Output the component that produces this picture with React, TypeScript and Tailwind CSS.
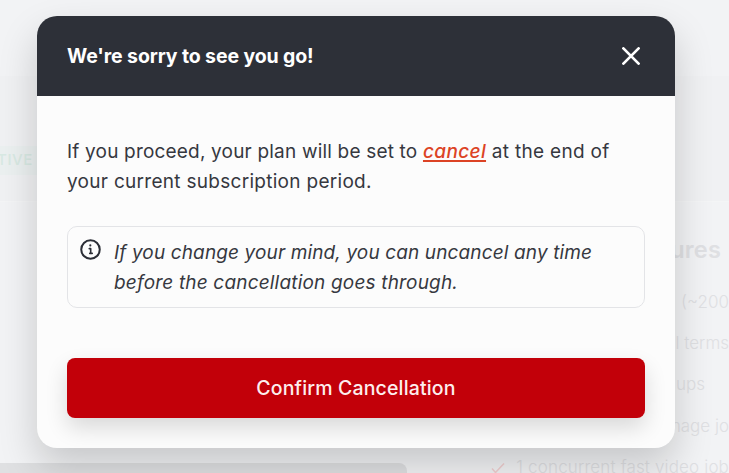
import React from "react";

const InfoIcon = () => (
  <svg width="21" height="21" viewBox="0 0 22 22" fill="none" className="ml-px mr-px mt-px shrink-0">
    <circle cx="11" cy="11" r="9.7" stroke="#2b2e36" strokeWidth="2.1" />
    <circle cx="10.8" cy="6.7" r="1.1" fill="#2b2e36" />
    <path
      d="M9.7 10.1h1.5v4.8M10.2 15.1h2.6"
      stroke="#2b2e36"
      strokeWidth="1.7"
      strokeLinecap="round"
      strokeLinejoin="round"
    />
  </svg>
);

const CloseIcon = () => (
  <svg width="18" height="18" viewBox="0 0 18 18" fill="none">
    <path d="M1.4 1.4l15.2 15.2M16.6 1.4L1.4 16.6" stroke="#fff" strokeWidth="2.7" strokeLinecap="round" />
  </svg>
);

const FeatureRow = ({ children }: { children: React.ReactNode }) => (
  <li className="flex h-[41.3px] items-center justify-end whitespace-nowrap">{children}</li>
);

const PlanPage = () => (
  <div className="flex h-full flex-col bg-[#f2f3f5] text-[#dfe0e3]">
    <div className="h-[76px] shrink-0" />
    <div className="flex h-[126px] shrink-0 flex-col border-b border-[#f4f5f6] bg-[#f0f1f3] pt-[70px]">
      <span className="flex h-[29px] w-[37px] items-center justify-end bg-[#ebf0f0] pr-[4px] text-[15px] font-medium tracking-[0.6px] text-[#d8e9e3]">
        ACTIVE
      </span>
    </div>
    <div className="flex min-h-0 flex-1 justify-between">
      <div className="mt-[261px] h-10 w-[407px] rounded-tr-lg bg-[#dfe0e2]" />
      <div className="w-[269px] pt-[30px]">
        <h3 className="flex h-9 items-center justify-end pr-[8px] text-[23.5px] font-semibold tracking-[0.2px]">
          Features
        </h3>
        <ul className="mt-[14px] w-[269px] text-[17px] font-light">
          <FeatureRow>
            <span className="mr-2">15 Fast hours</span>
            <span>(~200</span>
          </FeatureRow>
          <FeatureRow>General terms</FeatureRow>
          <FeatureRow>
            <span className="pr-[24px]">Credit top ups</span>
          </FeatureRow>
          <FeatureRow>3 concurrent image jo</FeatureRow>
          <FeatureRow>
            <svg width="14" height="12" viewBox="0 0 14 12" fill="none" className="mr-[11px]">
              <path d="M1 6.5l3.5 4L13 1.5" stroke="#f0cfd0" strokeWidth="1.5" />
            </svg>
            <span className="tracking-[0.15px]">1 concurrent fast video job</span>
          </FeatureRow>
        </ul>
      </div>
    </div>
  </div>
);

const CancelDialog = () => (
  <div
    role="dialog"
    className="absolute left-[37px] top-4 w-[638px] overflow-hidden rounded-[20px] bg-[#fcfcfc] text-[#36383f] shadow-[0_18px_38px_rgba(0,0,0,0.18)]"
  >
    <header className="flex h-20 items-center justify-between bg-[#2d3038] pl-[30px] pr-[35px]">
      <h2 className="pt-0.5 text-[19.5px] font-bold tracking-[-0.12px] text-white">We're sorry to see you go!</h2>
      <button aria-label="Close">
        <CloseIcon />
      </button>
    </header>
    <div className="px-[30px] pb-[30px] pt-[41px]">
      <p className="whitespace-nowrap text-[19px] leading-[30px]">
        <span className="tracking-[0.19px]">If you proceed, your plan will be set to </span>
        <em className="font-medium tracking-[0.35px] text-[#dc4325] underline decoration-2 underline-offset-2">cancel</em>
        <span className="tracking-[0.32px]"> at the end of</span>
        <br />
        <span className="tracking-[0.29px]">your current subscription period.</span>
      </p>
      <div className="mt-[29px] flex gap-3 rounded-[10px] border border-[#e3e4e7] px-[11px] pb-[9px] pt-[11px]">
        <InfoIcon />
        <p className="whitespace-nowrap text-[19px] italic leading-[30px]">
          <span className="tracking-[0.13px]">If you change your mind, you can uncancel any time</span>
          <br />
          <span className="tracking-[0.18px]">before the cancellation goes through.</span>
        </p>
      </div>
      <button className="mt-[50px] h-[60px] w-full rounded-lg bg-[#c20009] pt-0.5 text-[19.5px] font-medium tracking-[0.15px] text-[#fdeeee] shadow-[0_10px_22px_rgba(0,0,0,0.14)]">
        Confirm Cancellation
      </button>
    </div>
  </div>
);

export default function App() {
  return (
    <main className="relative h-[473px] w-[729px] overflow-hidden font-['Inter','Liberation_Sans',sans-serif]">
      <PlanPage />
      <CancelDialog />
    </main>
  );
}
